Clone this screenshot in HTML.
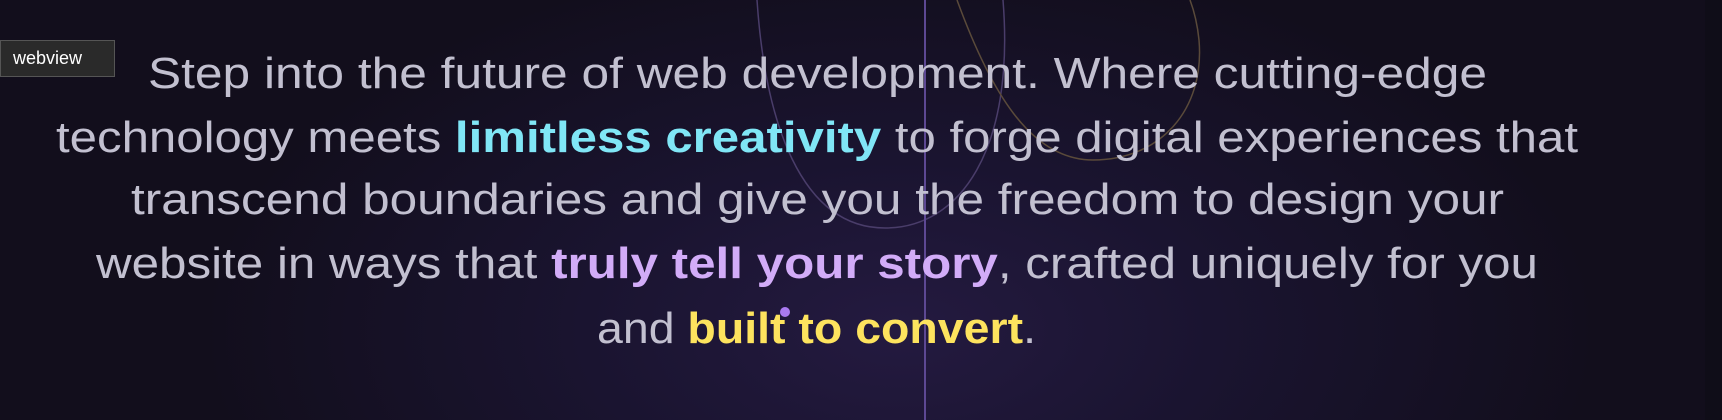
<!DOCTYPE html>
<html><head><meta charset="utf-8"><style>
html,body{margin:0;padding:0;width:1722px;height:420px;overflow:hidden;background:#130f1e}
.bg{position:absolute;inset:0;background:radial-gradient(ellipse 700px 380px at 900px 330px,#241a40 0%,#1a1430 45%,#120e1c 100%)}
.tag{position:absolute;left:0;top:40px;width:115px;height:37px;background:#2a2a2a;border:1px solid #555;box-sizing:border-box;color:#fff;font:18px "Liberation Sans",sans-serif;line-height:35px;padding-left:12px}
svg{position:absolute;left:0;top:0}
</style></head><body>
<div class="bg"></div>
<svg width="1722" height="420" viewBox="0 0 1722 420">
<rect x="1705" y="0" width="17" height="420" fill="#0f0d18"/>
<path d="M757 0 C765 120 800 228 885 228 C960 228 1015 150 1003 0" fill="none" stroke="#4a3d6a" stroke-width="1.5"/>
<path d="M957 0 C990 90 1030 160 1093 160 C1160 160 1205 110 1199 40 C1197 20 1193 8 1190 0" fill="none" stroke="#5a4a3a" stroke-width="1.5"/>
<rect x="924" y="0" width="2" height="420" fill="#5d4893"/>
<g font-family="Liberation Sans, sans-serif" font-size="44" fill="#c2c0d0">
<text x="148" y="88" textLength="1339" lengthAdjust="spacingAndGlyphs">Step into the future of web development. Where cutting-edge</text>
<text x="56" y="152" textLength="1522" lengthAdjust="spacingAndGlyphs">technology meets <tspan fill="#80e6f6" font-weight="bold">limitless creativity</tspan> to forge digital experiences that</text>
<text x="131" y="214" textLength="1373" lengthAdjust="spacingAndGlyphs">transcend boundaries and give you the freedom to design your</text>
<text x="96" y="278" textLength="1442" lengthAdjust="spacingAndGlyphs">website in ways that <tspan fill="#d2acf8" font-weight="bold">truly tell your story</tspan>, crafted uniquely for you</text>
<text x="597" y="343" textLength="439" lengthAdjust="spacingAndGlyphs">and <tspan fill="#fde35e" font-weight="bold">built to convert</tspan>.</text>
</g>
<circle cx="785" cy="312" r="5" fill="#a97af0"/>
</svg>
<div class="tag">webview</div>
</body></html>
